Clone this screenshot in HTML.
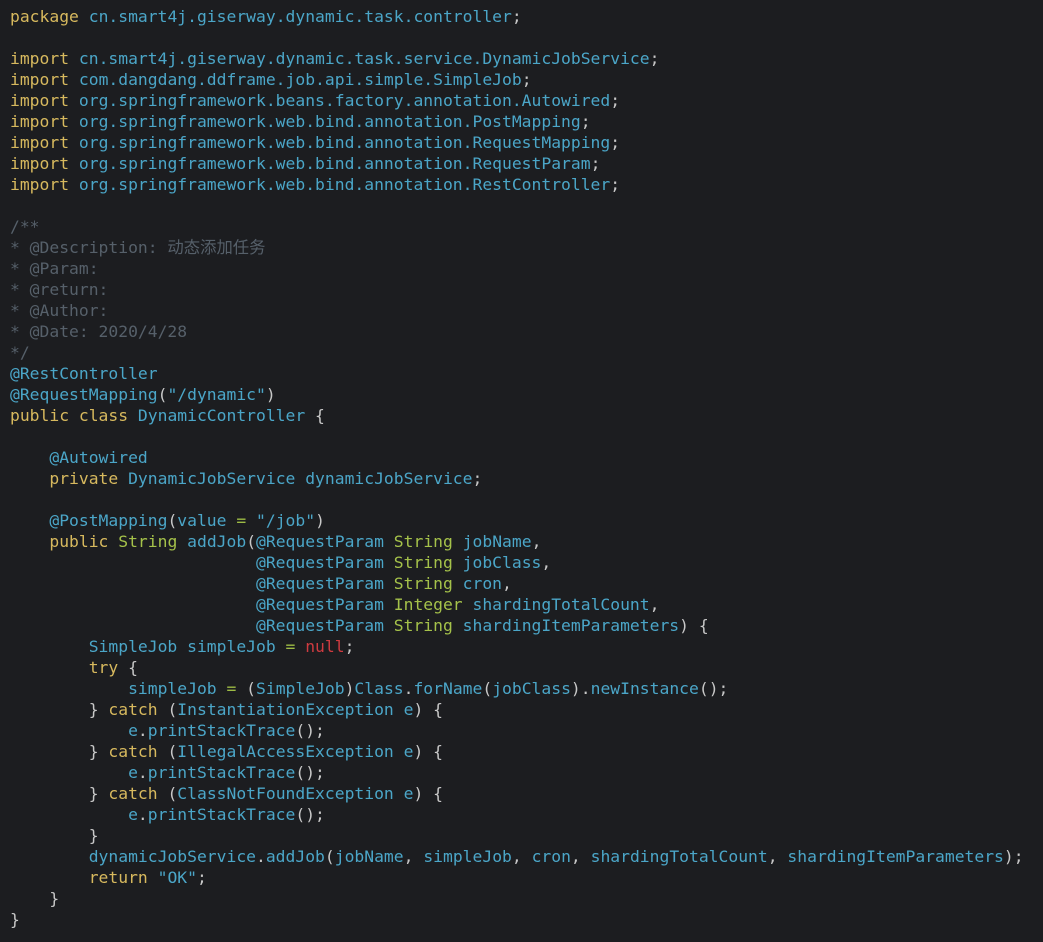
<!DOCTYPE html>
<html><head><meta charset="utf-8"><style>
html,body{margin:0;padding:0;background:#1c1d20;width:1043px;height:942px;overflow:hidden}
pre{margin:0;padding:6px 0 0 10px;font-family:"DejaVu Sans Mono","Noto Sans CJK SC",monospace;font-size:16.35px;line-height:21px;color:#c8c8c8}
.k{color:#d7b95e}.b{color:#4ba6c8}.g{color:#9dbb45}.c{color:#56606a}.r{color:#cf3b40}.t{color:#a5c24a}
</style></head><body><pre><span class="k">package</span> <span class="b">cn.smart4j.giserway.dynamic.task.controller</span>;

<span class="k">import</span> <span class="b">cn.smart4j.giserway.dynamic.task.service.DynamicJobService</span>;
<span class="k">import</span> <span class="b">com.dangdang.ddframe.job.api.simple.SimpleJob</span>;
<span class="k">import</span> <span class="b">org.springframework.beans.factory.annotation.Autowired</span>;
<span class="k">import</span> <span class="b">org.springframework.web.bind.annotation.PostMapping</span>;
<span class="k">import</span> <span class="b">org.springframework.web.bind.annotation.RequestMapping</span>;
<span class="k">import</span> <span class="b">org.springframework.web.bind.annotation.RequestParam</span>;
<span class="k">import</span> <span class="b">org.springframework.web.bind.annotation.RestController</span>;

<span class="c">/**
* @Description: 动态添加任务
* @Param:
* @return:
* @Author:
* @Date: 2020/4/28
*/</span>
<span class="b">@RestController</span>
<span class="b">@RequestMapping</span>(<span class="b">"/dynamic"</span>)
<span class="k">public class</span> <span class="b">DynamicController</span> {

    <span class="b">@Autowired</span>
    <span class="k">private</span> <span class="b">DynamicJobService dynamicJobService</span>;

    <span class="b">@PostMapping</span>(<span class="b">value</span> <span class="g">=</span> <span class="b">"/job"</span>)
    <span class="k">public</span> <span class="t">String</span> <span class="b">addJob</span>(<span class="b">@RequestParam</span> <span class="t">String</span> <span class="b">jobName</span>,
                         <span class="b">@RequestParam</span> <span class="t">String</span> <span class="b">jobClass</span>,
                         <span class="b">@RequestParam</span> <span class="t">String</span> <span class="b">cron</span>,
                         <span class="b">@RequestParam</span> <span class="t">Integer</span> <span class="b">shardingTotalCount</span>,
                         <span class="b">@RequestParam</span> <span class="t">String</span> <span class="b">shardingItemParameters</span>) {
        <span class="b">SimpleJob simpleJob</span> <span class="g">=</span> <span class="r">null</span>;
        <span class="k">try</span> {
            <span class="b">simpleJob</span> <span class="g">=</span> (<span class="b">SimpleJob</span>)<span class="b">Class</span>.<span class="b">forName</span>(<span class="b">jobClass</span>).<span class="b">newInstance</span>();
        } <span class="k">catch</span> (<span class="b">InstantiationException e</span>) {
            <span class="b">e</span>.<span class="b">printStackTrace</span>();
        } <span class="k">catch</span> (<span class="b">IllegalAccessException e</span>) {
            <span class="b">e</span>.<span class="b">printStackTrace</span>();
        } <span class="k">catch</span> (<span class="b">ClassNotFoundException e</span>) {
            <span class="b">e</span>.<span class="b">printStackTrace</span>();
        }
        <span class="b">dynamicJobService</span>.<span class="b">addJob</span>(<span class="b">jobName</span>, <span class="b">simpleJob</span>, <span class="b">cron</span>, <span class="b">shardingTotalCount</span>, <span class="b">shardingItemParameters</span>);
        <span class="k">return</span> <span class="b">"OK"</span>;
    }
}</pre></body></html>
